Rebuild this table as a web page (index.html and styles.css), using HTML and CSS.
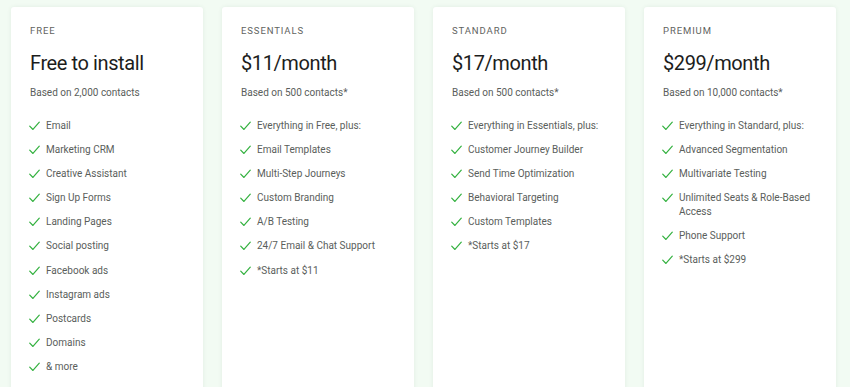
FILE: index.html
```html
<!DOCTYPE html>
<html lang="en">
<head>
  <meta charset="UTF-8" />
  <title>Pricing</title>
  <meta name="viewport" content="width=device-width, initial-scale=1" />
  <link rel="stylesheet" href="styles.css">
</head>
<body>
  <svg style="display:none">
    <symbol id="tick" viewBox="0 0 12 10">
      <path d="M0.8 5.2 L4.3 8.8 L11.2 0.8" fill="none" stroke="currentColor" stroke-width="1.3" stroke-linecap="round" stroke-linejoin="round"/>
    </symbol>
  </svg>

  <div class="plans">
    <!-- Free -->
    <div class="plan">
      <div class="plan-name">Free</div>
      <div class="plan-price">Free to install</div>
      <div class="plan-note">Based on 2,000 contacts</div>
      <ul class="features">
        <li><svg class="check"><use href="#tick"/></svg><span>Email</span></li>
        <li><svg class="check"><use href="#tick"/></svg><span>Marketing CRM</span></li>
        <li><svg class="check"><use href="#tick"/></svg><span>Creative Assistant</span></li>
        <li><svg class="check"><use href="#tick"/></svg><span>Sign Up Forms</span></li>
        <li><svg class="check"><use href="#tick"/></svg><span>Landing Pages</span></li>
        <li><svg class="check"><use href="#tick"/></svg><span>Social posting</span></li>
        <li><svg class="check"><use href="#tick"/></svg><span>Facebook ads</span></li>
        <li><svg class="check"><use href="#tick"/></svg><span>Instagram ads</span></li>
        <li><svg class="check"><use href="#tick"/></svg><span>Postcards</span></li>
        <li><svg class="check"><use href="#tick"/></svg><span>Domains</span></li>
        <li><svg class="check"><use href="#tick"/></svg><span>&amp; more</span></li>
      </ul>
    </div>

    <!-- Essentials -->
    <div class="plan">
      <div class="plan-name">Essentials</div>
      <div class="plan-price">$11/month</div>
      <div class="plan-note">Based on 500 contacts*</div>
      <ul class="features">
        <li><svg class="check"><use href="#tick"/></svg><span>Everything in Free, plus:</span></li>
        <li><svg class="check"><use href="#tick"/></svg><span>Email Templates</span></li>
        <li><svg class="check"><use href="#tick"/></svg><span>Multi-Step Journeys</span></li>
        <li><svg class="check"><use href="#tick"/></svg><span>Custom Branding</span></li>
        <li><svg class="check"><use href="#tick"/></svg><span>A/B Testing</span></li>
        <li><svg class="check"><use href="#tick"/></svg><span>24/7 Email &amp; Chat Support</span></li>
        <li><svg class="check"><use href="#tick"/></svg><span>*Starts at $11</span></li>
      </ul>
    </div>

    <!-- Standard -->
    <div class="plan">
      <div class="plan-name">Standard</div>
      <div class="plan-price">$17/month</div>
      <div class="plan-note">Based on 500 contacts*</div>
      <ul class="features">
        <li><svg class="check"><use href="#tick"/></svg><span>Everything in Essentials, plus:</span></li>
        <li><svg class="check"><use href="#tick"/></svg><span>Customer Journey Builder</span></li>
        <li><svg class="check"><use href="#tick"/></svg><span>Send Time Optimization</span></li>
        <li><svg class="check"><use href="#tick"/></svg><span>Behavioral Targeting</span></li>
        <li><svg class="check"><use href="#tick"/></svg><span>Custom Templates</span></li>
        <li><svg class="check"><use href="#tick"/></svg><span>*Starts at $17</span></li>
      </ul>
    </div>

    <!-- Premium -->
    <div class="plan">
      <div class="plan-name">Premium</div>
      <div class="plan-price">$299/month</div>
      <div class="plan-note">Based on 10,000 contacts*</div>
      <ul class="features">
        <li><svg class="check"><use href="#tick"/></svg><span>Everything in Standard, plus:</span></li>
        <li><svg class="check"><use href="#tick"/></svg><span>Advanced Segmentation</span></li>
        <li><svg class="check"><use href="#tick"/></svg><span>Multivariate Testing</span></li>
        <li><svg class="check"><use href="#tick"/></svg><span>Unlimited Seats &amp; Role-Based Access</span></li>
        <li><svg class="check"><use href="#tick"/></svg><span>Phone Support</span></li>
        <li><svg class="check"><use href="#tick"/></svg><span>*Starts at $299</span></li>
      </ul>
    </div>
  </div>
</body>
</html>
```

FILE: styles.css
```css
html, body {
  margin: 0; padding: 0; height: 100%; overflow: hidden;
  background: #f2fbf3;
  font-family: Roboto, "Noto Sans", sans-serif;
}

.plans {
  display: grid;
  grid-template-columns: repeat(4, 192px);
  gap: 19px;
  padding: 7px 0 0 11px;
}

.plan {
  background: #fff;
  border-radius: 3px;
  box-shadow: 0 0 4px rgba(40, 90, 50, 0.08);
  padding: 17px 14px 0 19px;
  min-height: 420px;
  box-sizing: border-box;
}

.plan-name {
  font-size: 9.5px; line-height: 14px;
  letter-spacing: 0.9px; text-transform: uppercase;
  color: #5f6461;
}

.plan-price {
  margin-top: 11px;
  font-size: 20px; line-height: 28px;
  letter-spacing: -0.4px;
  color: #1c1d1c;
}

.plan-note {
  margin-top: 9px;
  font-size: 10px; line-height: 14px;
  color: #5a5e5b;
}

.features {
  list-style: none; margin: 19px 0 0; padding: 0;
}

.features li {
  display: flex; align-items: flex-start; gap: 6px;
  font-size: 10px; line-height: 14px;
  color: #5a5e5b;
  margin-bottom: 10.1px;
}

.check {
  flex: none;
  width: 11px; height: 10px;
  margin: 2px 0 0 -1px;
  color: #33b13f;
}
```
